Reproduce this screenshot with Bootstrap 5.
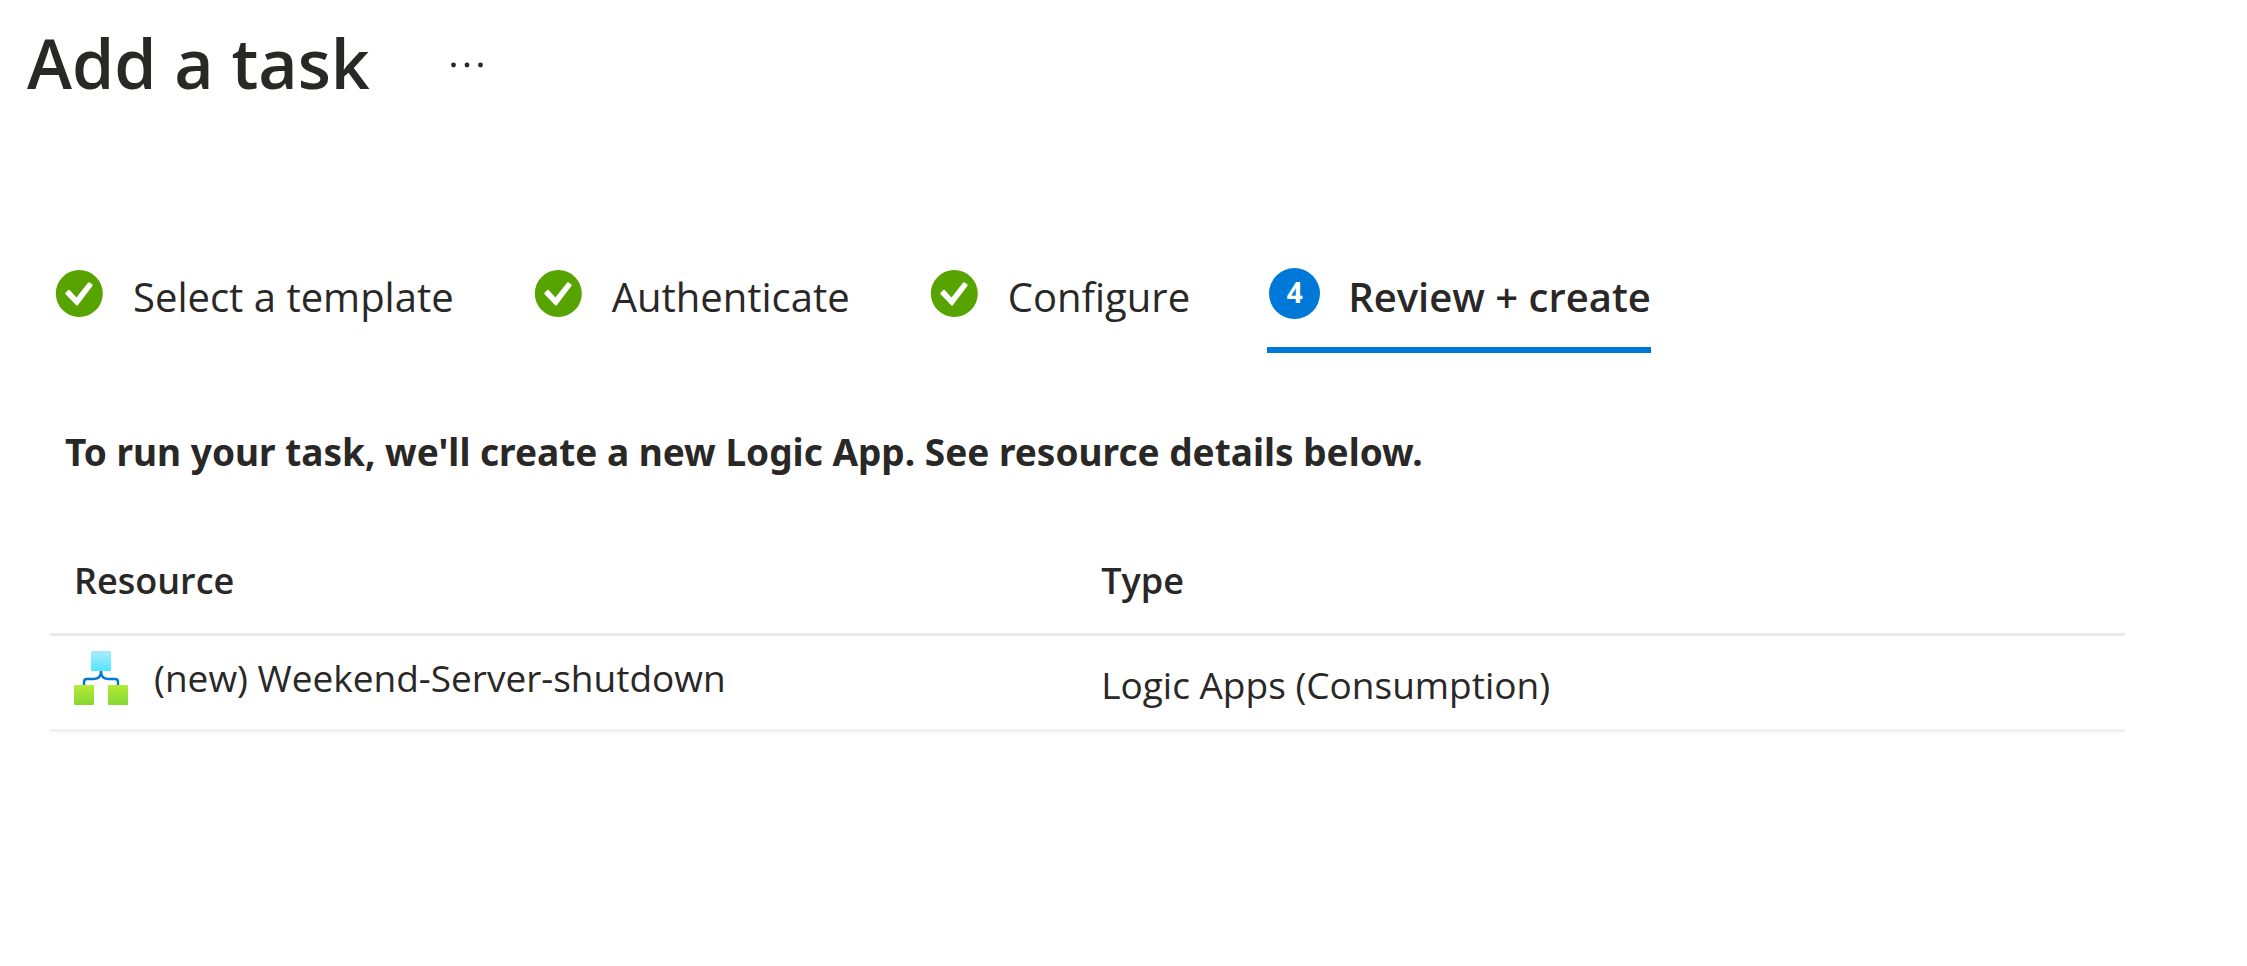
<!DOCTYPE html>
<html lang="en">
<head>
<meta charset="utf-8">
<meta name="viewport" content="width=device-width, initial-scale=1">
<title>Add a task</title>
<link href="https://cdn.jsdelivr.net/npm/bootstrap@5.3.0/dist/css/bootstrap.min.css" rel="stylesheet">
<style>
  body { font-family: "Open Sans", "Noto Sans", sans-serif; font-size: 37px; line-height: 52px; color: #292827; background: #fff; }
  .page-head { padding: 23px 27px 0; gap: 80px; }
  .page-title { font-size: 68px; line-height: 80px; font-weight: 600; }
  .more-btn { width: 34px; height: 34px; color: inherit; }
  .wizard { padding: 0 52px; margin-top: 165px; column-gap: 77px; }
  .step { gap: 26px; padding: 0 0 21px; border: 0; border-bottom: 6px solid transparent; background: none; color: inherit; font-size: 40px; line-height: 58px; }
  .step.current { border-bottom-color: #0078d7; font-weight: 600; }
  .step-icon { width: 55px; height: 51px; }
  .step-number { width: 51px; height: 51px; margin: 0 2px; background: #0078d7; color: #fff; font-size: 28px; line-height: 48px; font-weight: 700; }
  .review { padding: 73px 122px 0 50px; }
  .intro { font-family: "Noto Sans", "Open Sans", sans-serif; padding-left: 15px; margin-bottom: 60px; }
  .resources { border-collapse: separate; border-spacing: 0; table-layout: fixed; }
  .resources th { padding: 17px 24px 26px; font-size: 36px; font-weight: 600; border-bottom: 3px solid #eaeaea; }
  .resources th:first-child { width: 49.5%; }
  .resources td { padding: 15px 24px 24px; border-bottom: 3px solid #f1f1f1; vertical-align: top; }
  .resources td.type-cell { padding-top: 23px; padding-bottom: 16px; }
  .res-name { gap: 26px; line-height: 54px; }
  .res-icon { width: 54px; height: 54px; }
</style>
</head>
<body>
<header class="page-head d-flex align-items-center">
  <h1 class="page-title m-0">Add a task</h1>
  <button type="button" class="more-btn btn p-0 border-0 d-flex" aria-label="More options">
    <svg width="34" height="34" viewBox="0 0 34 34" fill="currentColor" aria-hidden="true"><circle cx="3.5" cy="19" r="2.4"/><circle cx="17" cy="19" r="2.4"/><circle cx="30.5" cy="19" r="2.4"/></svg>
  </button>
</header>

<svg class="d-none" aria-hidden="true">
  <symbol id="done" viewBox="0 0 55 51"><circle cx="27.3" cy="25.5" r="23.5" fill="#57a300"/><path d="M13.6 26.2Q13 25.3 13.7 24.6L16.3 22Q17 21.4 17.7 22.1L24.4 29.5 36 14.8Q36.7 13.9 37.6 14.5L40.2 16.3Q41 17 40.4 17.9L25.8 37.2Q25 38.2 24.2 37.3Z" fill="#fff"/></symbol>
</svg>

<nav class="wizard d-flex flex-wrap" aria-label="Steps">
  <button type="button" class="step d-flex align-items-start"><svg class="step-icon flex-shrink-0" aria-hidden="true"><use href="#done"/></svg><span>Select a template</span></button>
  <button type="button" class="step d-flex align-items-start"><svg class="step-icon flex-shrink-0" aria-hidden="true"><use href="#done"/></svg><span>Authenticate</span></button>
  <button type="button" class="step d-flex align-items-start"><svg class="step-icon flex-shrink-0" aria-hidden="true"><use href="#done"/></svg><span>Configure</span></button>
  <button type="button" class="step current d-flex align-items-start" aria-current="step"><span class="step-number rounded-circle flex-shrink-0 text-center">4</span><span>Review + create</span></button>
</nav>

<main class="review">
  <p class="intro fw-bold">To run your task, we'll create a new Logic App. See resource details below.</p>
  <table class="resources w-100">
    <thead><tr><th scope="col">Resource</th><th scope="col">Type</th></tr></thead>
    <tbody>
      <tr>
        <td>
          <div class="res-name d-flex align-items-start">
            <svg class="res-icon flex-shrink-0" viewBox="0 0 54 54" aria-hidden="true">
              <defs>
                <linearGradient id="sky" x1="0" y1="0" x2="0" y2="1"><stop offset=".2" stop-color="#9cebff"/><stop offset="1" stop-color="#50e6ff"/></linearGradient>
                <linearGradient id="lime" x1="0" y1="0" x2="0" y2="1"><stop offset="0" stop-color="#b4ec36"/><stop offset="1" stop-color="#86d633"/></linearGradient>
              </defs>
              <path d="M10 35V31Q10 28 13 28H20Q27 28 27 20Q27 28 34 28H41Q44 28 44 31V35" fill="none" stroke="#0078d4" stroke-width="2.4"/>
              <rect x="17" y="0" width="20" height="20" rx="1" fill="url(#sky)"/>
              <rect x="0" y="34" width="20" height="20" rx="1" fill="url(#lime)"/>
              <rect x="34" y="34" width="20" height="20" rx="1" fill="url(#lime)"/>
            </svg>
            <span>(new) Weekend-Server-shutdown</span>
          </div>
        </td>
        <td class="type-cell">Logic Apps (Consumption)</td>
      </tr>
    </tbody>
  </table>
</main>
<script src="https://cdn.jsdelivr.net/npm/bootstrap@5.3.0/dist/js/bootstrap.bundle.min.js"></script>
</body>
</html>
